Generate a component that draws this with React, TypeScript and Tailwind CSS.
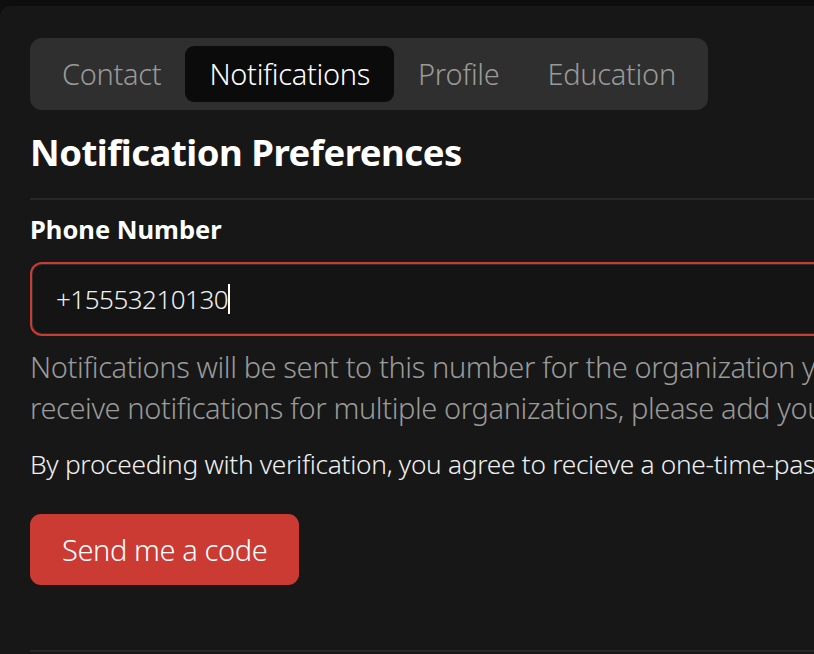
import React from "react";

export default function App() {
  const tabs = ["Contact", "Notifications", "Profile", "Education"];
  return (
    <div className="w-[814px] h-[654px] overflow-hidden bg-[#0e0e0e] pt-[6px]" style={{ fontFamily: '"Noto Sans", sans-serif' }}>
      <div className="w-[1400px] h-[700px] bg-[#171717] rounded-tl-[10px] px-[30px] pt-[32px]">
        <div className="inline-flex bg-[#2f2f2f] rounded-[12px] p-2">
          {tabs.map((t) => (
            <div
              key={t}
              className={
                t === "Notifications"
                  ? "px-6 h-[56px] flex items-center rounded-[9px] bg-[#0b0b0b] text-white text-[29px] font-light tracking-[-0.3px]"
                  : "px-6 h-[56px] flex items-center rounded-[9px] text-[#9a9a9a] text-[29px] font-light tracking-[-0.3px]"
              }
            >
              {t}
            </div>
          ))}
        </div>
        <h1 className="mt-[18px] text-[36.5px] leading-[48px] font-bold text-white tracking-[-0.5px]">Notification Preferences</h1>
        <div className="mt-[22px] h-[2px] bg-[#262626]" />
        <div className="mt-[14px] text-[25.5px] leading-[30px] font-bold text-white">Phone Number</div>
        <div className="mt-[18px] h-[74px] rounded-[12px] border-2 border-[#cb3b34] bg-[#141414] shadow-[inset_0_0_0_1px_#2c2c2c] flex items-center pl-[24px]">
          <span className="text-[26px] font-light text-[#f0f0f0] tracking-[-0.5px]">+15553210130</span>
          <span className="w-[2px] h-[30px] bg-white" />
        </div>
        <p className="mt-[10px] text-[29px] leading-[41px] font-light text-[#9a9a9a] tracking-[-0.4px] whitespace-nowrap">
          Notifications will be sent to this number for the organization you are currently viewing. If you would like to
          <br />
          receive notifications for multiple organizations, please add your phone number to each organization.
        </p>
        <p className="mt-[20px] text-[26.3px] leading-[32px] font-light text-[#f0f0f0] tracking-[-0.3px] whitespace-nowrap">
          By proceeding with verification, you agree to recieve a one-time-passcode via SMS from this service.
        </p>
        <button className="mt-[34px] h-[71px] px-[32px] rounded-[11px] bg-[#cb3b34] text-white text-[29px] font-light tracking-[-0.4px]">
          Send me a code
        </button>
        <div className="mt-[65px] h-[2px] bg-[#262626]" />
      </div>
    </div>
  );
}
